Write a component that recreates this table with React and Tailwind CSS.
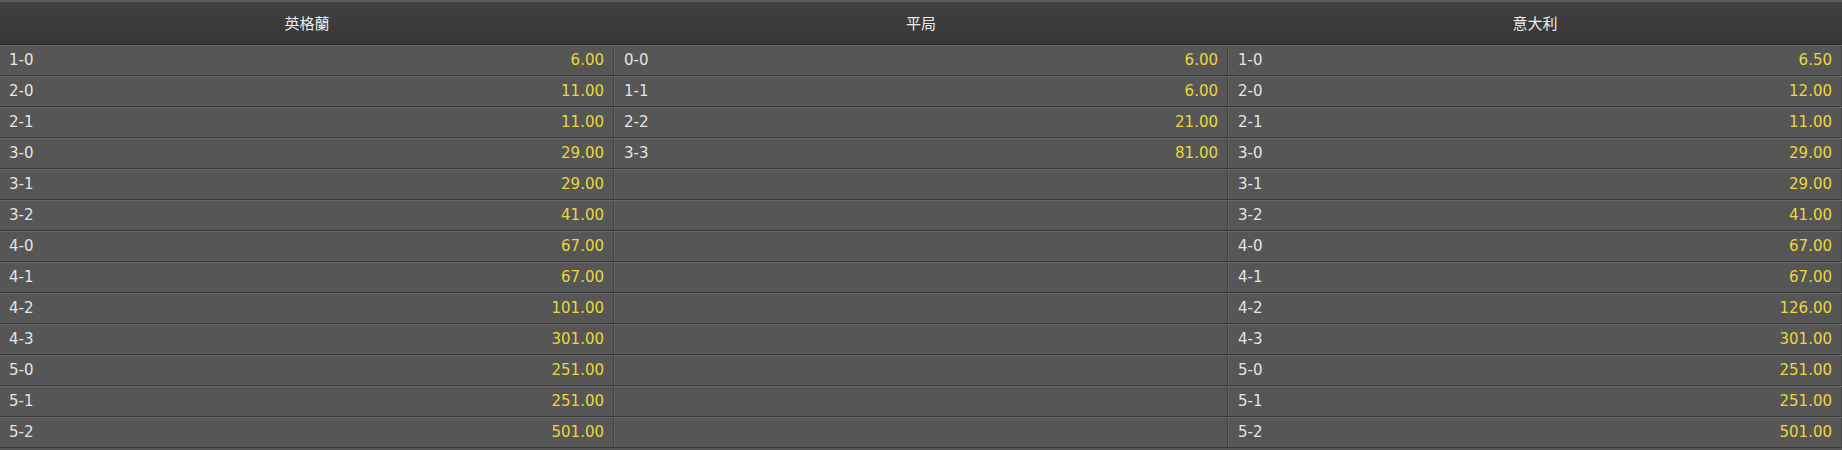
import React from "react";

const home = [
  ["1-0", "6.00"], ["2-0", "11.00"], ["2-1", "11.00"], ["3-0", "29.00"], ["3-1", "29.00"],
  ["3-2", "41.00"], ["4-0", "67.00"], ["4-1", "67.00"], ["4-2", "101.00"], ["4-3", "301.00"],
  ["5-0", "251.00"], ["5-1", "251.00"], ["5-2", "501.00"],
];
const draw = [["0-0", "6.00"], ["1-1", "6.00"], ["2-2", "21.00"], ["3-3", "81.00"]];
const away = [
  ["1-0", "6.50"], ["2-0", "12.00"], ["2-1", "11.00"], ["3-0", "29.00"], ["3-1", "29.00"],
  ["3-2", "41.00"], ["4-0", "67.00"], ["4-1", "67.00"], ["4-2", "126.00"], ["4-3", "301.00"],
  ["5-0", "251.00"], ["5-1", "251.00"], ["5-2", "501.00"],
];

function Cell({ item, first }) {
  return (
    <div
      className={
        "flex h-full items-center justify-between px-[9px] border-r border-r-[#434343] " +
        (first ? "" : "border-l border-l-[#636363]")
      }
    >
      <span className="text-[#e4e4e4]">{item ? item[0] : ""}</span>
      <span className="text-[#ead63c]">{item ? item[1] : ""}</span>
    </div>
  );
}

export default function App() {
  return (
    <div
      className="w-[1842px] h-[450px] overflow-hidden bg-[#555555] text-[15px]"
      style={{ fontFamily: '"DejaVu Sans", Verdana, "Noto Sans CJK TC", sans-serif' }}
    >
      <div className="grid h-[45px] grid-cols-3 border-t-2 border-t-[#585858] border-b border-b-[#2e2e2e] bg-gradient-to-b from-[#414141] to-[#363636] text-[#ececec]">
        <div className="flex items-center justify-center" style={{ fontFamily: '"Noto Sans CJK TC", sans-serif' }}>英格蘭</div>
        <div className="flex items-center justify-center" style={{ fontFamily: '"Noto Sans CJK TC", sans-serif' }}>平局</div>
        <div className="flex items-center justify-center" style={{ fontFamily: '"Noto Sans CJK TC", sans-serif' }}>意大利</div>
      </div>
      {home.map((h, i) => (
        <div
          key={i}
          className="grid h-[31px] grid-cols-3 border-t border-t-[#666666] border-b border-b-[#3a3a3a] bg-[#565656]"
        >
          <Cell item={h} first />
          <Cell item={draw[i]} />
          <Cell item={away[i]} />
        </div>
      ))}
    </div>
  );
}
